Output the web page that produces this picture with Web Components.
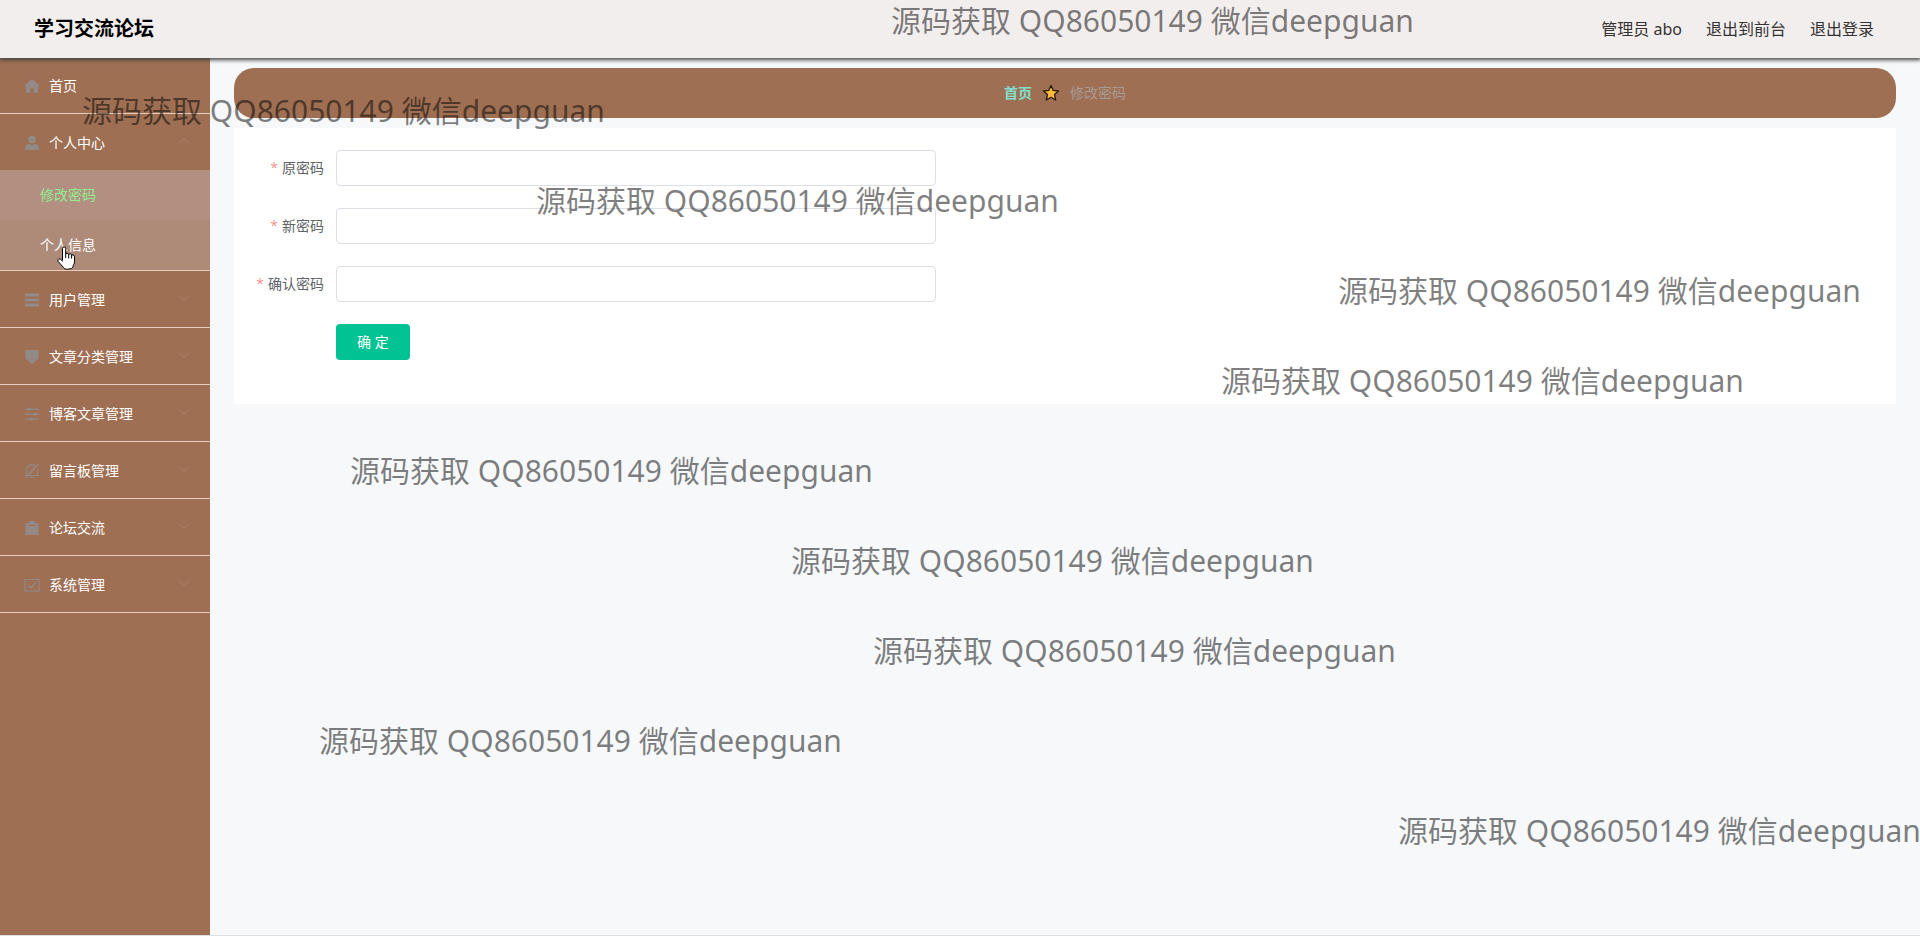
<!DOCTYPE html>
<html lang="zh-CN">
<head>
<meta charset="utf-8">
<title>学习交流论坛</title>
<style>
  body {
    margin: 0;
    font-family: "Noto Sans", "Noto Sans CJK SC", sans-serif;
    font-size: 14px;
    line-height: 20px;
    color: #606266;
    --brand: #9e6f53;
    --header: #f3eeee;
  }
</style>
</head>
<body>
<forum-app>
  <forum-header slot="header" name="学习交流论坛">
    <span>管理员 abo</span>
    <a href="#front">退出到前台</a>
    <a href="#logout">退出登录</a>
  </forum-header>
  <side-menu slot="menu">
    <menu-item icon="home" label="首页"></menu-item>
    <menu-item icon="user" label="个人中心" arrow open>
      <sub-item active>修改密码</sub-item>
      <sub-item>个人信息</sub-item>
    </menu-item>
    <menu-item icon="list" label="用户管理" arrow></menu-item>
    <menu-item icon="badge" label="文章分类管理" arrow></menu-item>
    <menu-item icon="sliders" label="博客文章管理" arrow></menu-item>
    <menu-item icon="mute" label="留言板管理" arrow></menu-item>
    <menu-item icon="clipboard" label="论坛交流" arrow></menu-item>
    <menu-item icon="check" label="系统管理" arrow></menu-item>
  </side-menu>
  <bread-crumb home="首页" current="修改密码"></bread-crumb>
  <password-form></password-form>
</forum-app>
<water-mark text="源码获取 QQ86050149 微信deepguan"></water-mark>
<hand-cursor></hand-cursor>

<script>
const ICONS = {
  home: '<path d="M8 1 0 8h2v6.500h4.500V10h3v4.500H14V8h2z"/>',
  user: '<circle cx="8" cy="4.500" r="3.800"/><path d="M1 15c-.6-4 1-5.500 4-6q3 1.500 6 0c3 .5 4.600 2 4 6z"/>',
  list: '<path d="M1 1.500h14v3H1zM1 6.500h14v3H1zM1 11.500h14v3H1z"/>',
  badge: '<path d="M1.500 1h13v9l-2.500 1-4 4.500L4 11l-2.500-1z"/>',
  sliders: '<path d="M1 2.500h14v1.300H1zM1 7.500h14v1.300H1zM1 12.500h14v1.300H1z"/><circle cx="5" cy="3.100" r="1.600"/><circle cx="11" cy="8.100" r="1.600"/><circle cx="7" cy="13.100" r="1.600"/>',
  mute: '<path fill="none" stroke="currentColor" stroke-width="1.200" d="M2.500 12V7a5.500 5.500 0 0 1 9-4M13.500 6v6M1 12.500h14M6 14.500h4M2 14.500 14.500 1M5 11l5-6"/>',
  clipboard: '<path d="M1.500 3H5V1.500h1.500L8 0l1.500 1.500H11V3h3.500v12h-13zM4.500 5v1h7V5z" fill-rule="evenodd"/>',
  check: '<path fill="none" stroke="currentColor" stroke-width="1.200" d="M1 2.500h14v11.500H1zM4 8l3 3 5-6"/>'
};

class ForumApp extends HTMLElement {
  constructor() {
    super();
    this.attachShadow({ mode: "open" });
  }
  connectedCallback() {
    this.shadowRoot.innerHTML = `
      <style>
        :host {
          display: grid;
          grid-template-columns: 210px 1fr;
          grid-template-rows: 57px 1fr;
          box-sizing: border-box;
          min-height: 100vh;
          border-bottom: 1px solid #dfe1e1;
          background: #f6f8fa;
        }
        header {
          grid-column: 1 / -1;
          z-index: 1;
        }
        nav {
          display: grid;
        }
        main {
          display: flex;
          flex-direction: column;
          gap: 10px;
          padding: 11px 24px;
        }
      </style>
      <header><slot name="header"></slot></header>
      <nav><slot name="menu"></slot></nav>
      <main><slot></slot></main>
    `;
  }
}
customElements.define("forum-app", ForumApp);

class ForumHeader extends HTMLElement {
  constructor() {
    super();
    this.attachShadow({ mode: "open" });
  }
  connectedCallback() {
    this.shadowRoot.innerHTML = `
      <style>
        :host {
          display: flex;
          align-items: center;
          justify-content: space-between;
          height: 57px;
          padding: 0 46px 0 34px;
          background: var(--header);
          box-shadow: 0 1px 0 var(--header), 0 2px 4px 1px #444;
        }
        h1 {
          margin: 0;
          font-size: 20px;
          line-height: 28px;
          color: #000;
        }
        div {
          display: flex;
          gap: 24px;
          font-size: 16px;
          line-height: 24px;
          color: #333;
        }
        ::slotted(a) {
          color: inherit;
          text-decoration: none;
        }
      </style>
      <h1>${this.getAttribute("name")}</h1>
      <div><slot></slot></div>
    `;
  }
}
customElements.define("forum-header", ForumHeader);

class SideMenu extends HTMLElement {
  constructor() {
    super();
    this.attachShadow({ mode: "open" });
  }
  connectedCallback() {
    this.shadowRoot.innerHTML = `
      <style>
        :host {
          display: block;
          background: var(--brand);
        }
      </style>
      <slot></slot>
    `;
  }
}
customElements.define("side-menu", SideMenu);

class MenuItem extends HTMLElement {
  constructor() {
    super();
    this.attachShadow({ mode: "open" });
  }
  getArrow() {
    if (!this.hasAttribute("arrow")) return "";
    const d = this.hasAttribute("open") ? "M1 6l5-4 5 4" : "M1 2l5 4 5-4";
    return `<svg class="arrow" viewBox="0 0 12 12"><path d="${d}"/></svg>`;
  }
  connectedCallback() {
    this.shadowRoot.innerHTML = `
      <style>
        :host {
          display: block;
          border-bottom: 1px solid #e6cfc2;
        }
        button {
          display: flex;
          align-items: center;
          gap: 9px;
          width: 100%;
          height: 56px;
          padding: 2px 20px 0 24px;
          border: 0;
          background: none;
          font: inherit;
          color: #fff;
          text-align: left;
          cursor: pointer;
        }
        span {
          flex: 1;
        }
        .icon {
          width: 16px;
          height: 16px;
          fill: currentColor;
          color: #909399;
          opacity: .75;
        }
        .arrow {
          width: 12px;
          height: 12px;
          fill: none;
          stroke: #a97f69;
        }
      </style>
      <button type="button">
        <svg class="icon" viewBox="0 0 16 16">${ICONS[this.getAttribute("icon")]}</svg>
        <span>${this.getAttribute("label")}</span>
        ${this.getArrow()}
      </button>
      <slot></slot>
    `;
  }
}
customElements.define("menu-item", MenuItem);

class SubItem extends HTMLElement {
  constructor() {
    super();
    this.attachShadow({ mode: "open" });
  }
  connectedCallback() {
    this.shadowRoot.innerHTML = `
      <style>
        :host {
          display: block;
          background: #ad8b78;
        }
        :host([active]) {
          background: #b28f80;
        }
        a {
          display: block;
          padding-left: 40px;
          line-height: 50px;
          color: #fff;
          text-decoration: none;
        }
        :host([active]) a {
          color: #90ee90;
        }
      </style>
      <a href="#"><slot></slot></a>
    `;
  }
}
customElements.define("sub-item", SubItem);

class BreadCrumb extends HTMLElement {
  constructor() {
    super();
    this.attachShadow({ mode: "open" });
  }
  connectedCallback() {
    this.shadowRoot.innerHTML = `
      <style>
        :host {
          display: flex;
          align-items: center;
          justify-content: center;
          gap: 10px;
          height: 50px;
          border-radius: 20px;
          background: var(--brand);
        }
        a {
          font-weight: 700;
          color: #7fe0d0;
          text-decoration: none;
        }
        span {
          color: #a99a94;
        }
        svg {
          width: 18px;
          height: 18px;
          fill: #fdbb3c;
          stroke: #2a1a08;
          stroke-width: 1.300;
          stroke-linejoin: round;
        }
      </style>
      <a href="#">${this.getAttribute("home")}</a>
      <svg viewBox="0 0 18 18"><path d="M9 1.500l2.200 4.900 5.300.6-4 3.600 1.200 5.400L9 13.300 4.300 16l1.200-5.400-4-3.600 5.300-.6z"/></svg>
      <span>${this.getAttribute("current")}</span>
    `;
  }
}
customElements.define("bread-crumb", BreadCrumb);

class PasswordForm extends HTMLElement {
  constructor() {
    super();
    this.attachShadow({ mode: "open" });
  }
  getRow(id, label) {
    return `
      <label for="${id}">${label}</label>
      <input type="password" id="${id}" name="${id}" required>
    `;
  }
  connectedCallback() {
    this.shadowRoot.innerHTML = `
      <style>
        :host {
          display: block;
          padding: 22px 22px 44px;
          background: #fff;
        }
        form {
          display: grid;
          grid-template-columns: 68px minmax(0, 600px);
          gap: 22px 12px;
          align-items: center;
        }
        label {
          text-align: right;
          white-space: nowrap;
        }
        label::before {
          content: "*";
          margin-right: 4px;
          font-weight: 300;
          color: #f56c6c;
        }
        input {
          box-sizing: border-box;
          width: 100%;
          height: 36px;
          padding: 0 15px;
          border: 1px solid #dcdfe6;
          border-radius: 4px;
          font: inherit;
          color: inherit;
        }
        button {
          grid-column: 2;
          justify-self: start;
          height: 36px;
          padding: 0 21px;
          border: 0;
          border-radius: 4px;
          background: #00c292;
          font: inherit;
          color: #fff;
        }
      </style>
      <form>
        ${this.getRow("password", "原密码")}
        ${this.getRow("newpassword", "新密码")}
        ${this.getRow("repassword", "确认密码")}
        <button type="button">确 定</button>
      </form>
    `;
  }
}
customElements.define("password-form", PasswordForm);

// text stamped over the whole window, one line every 90px
class WaterMark extends HTMLElement {
  constructor() {
    super();
    this.attachShadow({ mode: "open" });
  }
  connectedCallback() {
    const text = this.getAttribute("text");
    const lefts = [891, 82, 536, 1338, 1221, 350, 791, 873, 319, 1398];
    this.shadowRoot.innerHTML = `
      <style>
        :host {
          position: absolute;
          inset: 0;
          z-index: 2;
          overflow: hidden;
          pointer-events: none;
          font-size: 30px;
          line-height: 42px;
          color: rgba(0, 0, 0, .5);
        }
        span {
          position: absolute;
          white-space: nowrap;
        }
      </style>
      ${lefts.map((x, i) => `<span style="left:${x}px;top:${i * 90}px">${text}</span>`).join("")}
    `;
  }
}
customElements.define("water-mark", WaterMark);

class HandCursor extends HTMLElement {
  constructor() {
    super();
    this.attachShadow({ mode: "open" });
  }
  connectedCallback() {
    this.shadowRoot.innerHTML = `
      <style>
        :host {
          position: absolute;
          left: 57px;
          top: 246px;
          z-index: 3;
          pointer-events: none;
        }
        svg {
          display: block;
          width: 19px;
          height: 24px;
          fill: #fff;
          stroke: #000;
          stroke-linejoin: round;
          stroke-linecap: round;
        }
      </style>
      <svg viewBox="0 0 19 24"><path d="M5.500 14V2.500a1.600 1.600 0 0 1 3.200 0v5.200q1.500-1 3 .4 1.700-.8 2.900.7 2.700-.4 2.900 2v5c0 2-1.500 3-1.500 5.200q-1 2-4.500 2.200H9.500q-2 0-3-1.700L1.200 15.500q-1-2 .6-2.700 1.500-.3 3.700 2.200M8.700 7.700v4M11.700 8.500v3.500M14.600 9v3.200"/></svg>
    `;
  }
}
customElements.define("hand-cursor", HandCursor);
</script>
</body>
</html>
